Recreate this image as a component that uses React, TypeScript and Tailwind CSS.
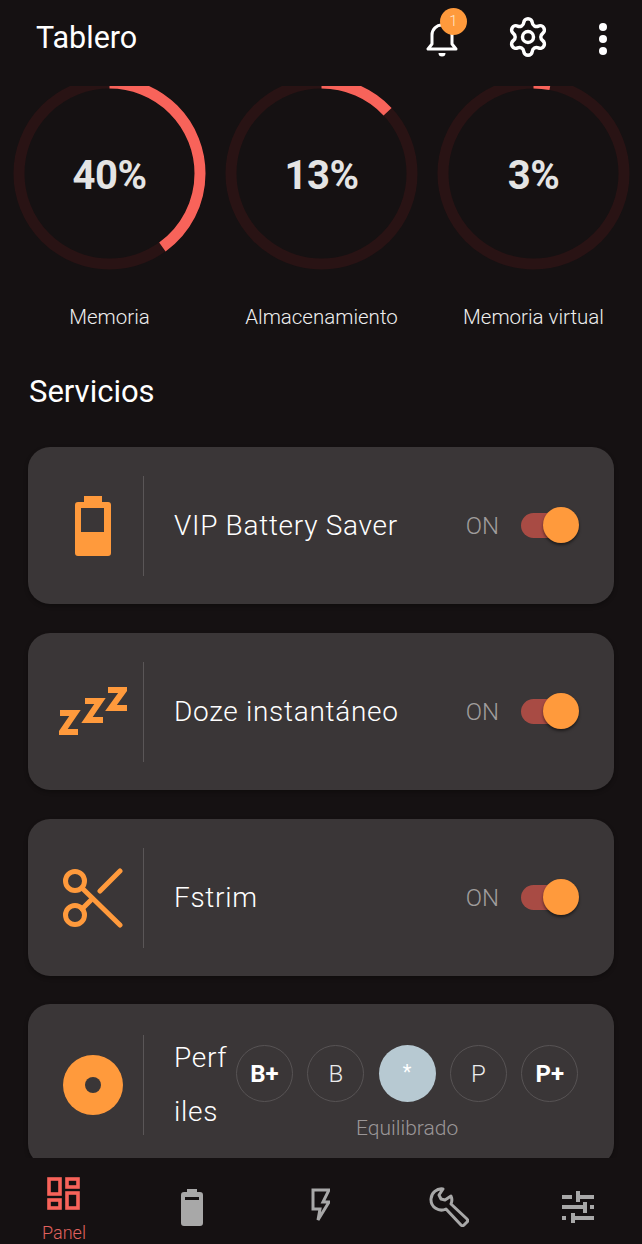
import { Settings } from "lucide-react";

const orange = "#ff9a3c";

function Ring({ pct, label }: { pct: number; label: string }) {
  const r = 90.5;
  const c = 2 * Math.PI * r;
  return (
    <div className="flex w-[193px] shrink-0 flex-col items-center">
      <div className="relative h-[193px] w-[193px]">
        <svg width="193" height="193" viewBox="0 0 193 193" className="-rotate-90">
          <circle cx="96.5" cy="96.5" r={r} fill="none" stroke="#291314" strokeWidth="11" />
          <circle
            cx="96.5"
            cy="96.5"
            r={r}
            fill="none"
            stroke="#f8635a"
            strokeWidth="11"
            strokeDasharray={`${(c * pct) / 100} ${c}`}
          />
        </svg>
        <div className="absolute inset-0 flex items-center justify-center pt-[4px] text-[40px] font-bold tracking-[-0.5px] text-[#e4e4e4]">
          {pct}%
        </div>
      </div>
      <div className="mt-[34px] whitespace-nowrap text-[20.5px] font-light leading-[26px] text-[#eeeeee]">{label}</div>
    </div>
  );
}

function Toggle() {
  return (
    <div className="flex items-center gap-[22px]">
      <span className="text-[24px] font-light text-[#a09d9d]">ON</span>
      <div className="relative h-[25px] w-[48px] rounded-full bg-[#a84b44]">
        <div className="absolute right-[-10px] top-[-6px] h-[36px] w-[36px] rounded-full bg-[#ff9a3c] shadow-[0_2px_3px_rgba(0,0,0,0.5)]" />
      </div>
    </div>
  );
}

function Card({ icon, tall, children }: { icon: React.ReactNode; tall?: boolean; children: React.ReactNode }) {
  return (
    <div
      className={
        tall
          ? "mt-[-1px] flex h-[162px] shrink-0 items-center rounded-[22px] bg-[#3a3637] shadow-[0_2px_4px_rgba(0,0,0,0.3)]"
          : "flex h-[157px] shrink-0 items-center rounded-[22px] bg-[#3a3637] shadow-[0_2px_4px_rgba(0,0,0,0.3)]"
      }
    >
      <div className="flex w-[115px] shrink-0 items-center justify-center pl-[15px]">{icon}</div>
      <div className="h-[100px] w-px shrink-0 bg-[#5a5657]" />
      {children}
    </div>
  );
}

function ServiceCard({ icon, title }: { icon: React.ReactNode; title: string }) {
  return (
    <Card icon={icon}>
      <div className="ml-[30px] flex-1 text-[28px] font-light tracking-[0.7px] text-[#ffffff]">{title}</div>
      <div className="mr-[45px]">
        <Toggle />
      </div>
    </Card>
  );
}

function ProfileBtn({ text, active, bold }: { text: string; active?: boolean; bold?: boolean }) {
  return (
    <div
      className={
        active
          ? "flex h-[57px] w-[57px] items-center justify-center rounded-full bg-[#b7c9d2] pb-[4px] text-[20px] text-white"
          : bold
            ? "flex h-[57px] w-[57px] items-center justify-center rounded-full border border-[#575354] text-[24px] font-bold text-white"
            : "flex h-[57px] w-[57px] items-center justify-center rounded-full border border-[#575354] text-[24px] font-light text-[#ececec]"
      }
    >
      {text}
    </div>
  );
}

function NavItem({ children, label }: { children: React.ReactNode; label?: string }) {
  return (
    <div className="relative flex h-[86px] w-[128px] flex-col items-center pt-[19px]">
      {children}
      {label && <span className="absolute top-[61px] text-[18px] font-light text-[#e2625e]">{label}</span>}
    </div>
  );
}

export default function App() {
  return (
    <div className="flex h-[1244px] w-[642px] flex-col overflow-hidden bg-[#151112] font-['Roboto',sans-serif]">
      <header className="flex h-[86px] shrink-0 items-start pl-[36px] pt-[18px]">
        <h1 className="flex-1 text-[30.5px] leading-[40px] text-white">Tablero</h1>
        <div className="relative mr-[48px] h-[40px] w-[32px]">
          <svg width="32" height="36" viewBox="0 0 32 36" fill="none" className="mt-[3px]">
            <path d="M2 28h28l-4-5V14a10 10 0 0 0-20 0v9z" stroke="white" strokeWidth="3" strokeLinejoin="round" />
            <path d="M12.5 32h7a3.5 3.5 0 0 1-7 0z" fill="white" />
          </svg>
          <div className="absolute left-[14px] top-[-10px] flex h-[27px] w-[27px] items-center justify-center rounded-full bg-[#ff9a3c] text-[15px] font-light text-[#ffe6c8]">
            1
          </div>
        </div>
        <Settings size={44} strokeWidth={1.9} color="white" className="mr-[46px] mt-[-3px]" />
        <svg width="14" height="34" viewBox="0 0 14 34" className="mr-[32px] mt-[4px]" fill="white">
          <circle cx="7" cy="5" r="4" />
          <circle cx="7" cy="17" r="4" />
          <circle cx="7" cy="29" r="4" />
        </svg>
      </header>

      <main className="min-h-0 flex-1 overflow-hidden">
        <div className="mt-[-9px] flex gap-[19px] pl-[13px]">
          <Ring pct={40} label="Memoria" />
          <Ring pct={13} label="Almacenamiento" />
          <Ring pct={3} label="Memoria virtual" />
        </div>
        <h2 className="ml-[29px] mt-[42px] text-[31px] leading-[40px] text-white">Servicios</h2>
        <div className="mx-[28px] mt-[35px] flex flex-col gap-[29px]">
          <ServiceCard
            title="VIP Battery Saver"
            icon={
              <svg width="36" height="60" viewBox="0 0 36 60">
                <path d="M9 0h18v6h6a3 3 0 0 1 3 3v48a3 3 0 0 1-3 3H3a3 3 0 0 1-3-3V9a3 3 0 0 1 3-3h6z" fill={orange} />
                <rect x="6" y="12" width="23" height="24" fill="#3a3637" />
              </svg>
            }
          />
          <ServiceCard
            title="Doze instantáneo"
            icon={
              <svg width="68" height="50" viewBox="0 0 68 50" fill="none" stroke={orange} strokeWidth="6">
                <path d="M1 26h15L3 45h16" />
                <path d="M26 14h15L28 33h16" />
                <path d="M49 3h16L52 21h16" />
              </svg>
            }
          />
          <ServiceCard
            title="Fstrim"
            icon={
              <svg width="60" height="60" viewBox="0 0 60 60" fill="none" stroke={orange} strokeWidth="5" strokeLinecap="round">
                <circle cx="12" cy="13" r="9.5" />
                <circle cx="12" cy="47" r="9.5" />
                <path d="M19 20 57 57" />
                <path d="M19 41 28 32" />
                <path d="M37 23 57 3" />
              </svg>
            }
          />
          <Card
            tall
            icon={
              <svg width="60" height="60" viewBox="0 0 60 60">
                <circle cx="30" cy="30" r="30" fill={orange} />
                <circle cx="30" cy="30" r="8" fill="#3a3637" />
              </svg>
            }
          >
            <div className="ml-[30px] w-[56px] shrink-0 break-all text-[28px] font-light leading-[54px] tracking-[0.7px] text-white">
              Perfiles
            </div>
            <div className="ml-[6px] flex flex-col items-center pt-[16px]">
              <div className="flex gap-[14.3px]">
                <ProfileBtn text="B+" bold />
                <ProfileBtn text="B" />
                <ProfileBtn text="*" active />
                <ProfileBtn text="P" />
                <ProfileBtn text="P+" bold />
              </div>
              <div className="mt-[13px] text-[21px] font-light leading-[26px] text-[#9a9697]">Equilibrado</div>
            </div>
          </Card>
        </div>
      </main>

      <nav className="flex h-[86px] shrink-0">
        <NavItem label="Panel">
          <svg width="34" height="34" viewBox="0 0 34 34" fill="none" stroke="#f8635a" strokeWidth="3.6">
            <rect x="2" y="2" width="11" height="15" />
            <rect x="20" y="2" width="11" height="8" />
            <rect x="2" y="23" width="11" height="8" />
            <rect x="20" y="16" width="11" height="15" />
          </svg>
        </NavItem>
        <NavItem>
          <svg width="22" height="37" viewBox="0 0 22 37" className="translate-y-[12px]">
            <path d="M6 0h10v3h3a3 3 0 0 1 3 3v28a3 3 0 0 1-3 3H3a3 3 0 0 1-3-3V6a3 3 0 0 1 3-3h3z" fill="#a8a8a8" />
            <rect x="4" y="8" width="14" height="3" fill="#151112" />
          </svg>
        </NavItem>
        <NavItem>
          <svg width="20" height="36" viewBox="0 0 20 36" fill="none" stroke="#a8a8a8" strokeWidth="3" className="translate-y-[10px]">
            <path d="M3 3H19L13 15H19L8 33L10 22H3Z" />
          </svg>
        </NavItem>
        <NavItem>
          <svg width="40" height="40" viewBox="0 0 40 40" fill="none" stroke="#a8a8a8" strokeWidth="3" strokeLinejoin="round" className="translate-x-px translate-y-[10px]">
            <path d="M22 17 38 32a2 2 0 0 1 0 3L35 38a2 2 0 0 1-3 0L17 22A10.5 10.5 0 0 1 2 12 10.5 10.5 0 0 1 14 2L10 8 12 12 16 13 22 9A10 10 0 0 1 22 17Z" />
          </svg>
        </NavItem>
        <NavItem>
          <svg width="32" height="32" viewBox="0 0 32 32" fill="#a8a8a8" className="translate-x-[2px] translate-y-[14px]">
            <rect x="0" y="4" width="10" height="4" />
            <rect x="14" y="0" width="4" height="11" />
            <rect x="18" y="4" width="14" height="4" />
            <rect x="0" y="14" width="21" height="4" />
            <rect x="21" y="11" width="4" height="11" />
            <rect x="28" y="14" width="4" height="4" />
            <rect x="0" y="25" width="4" height="4" />
            <rect x="9" y="22" width="4" height="10" />
            <rect x="13" y="25" width="19" height="4" />
          </svg>
        </NavItem>
      </nav>
    </div>
  );
}
